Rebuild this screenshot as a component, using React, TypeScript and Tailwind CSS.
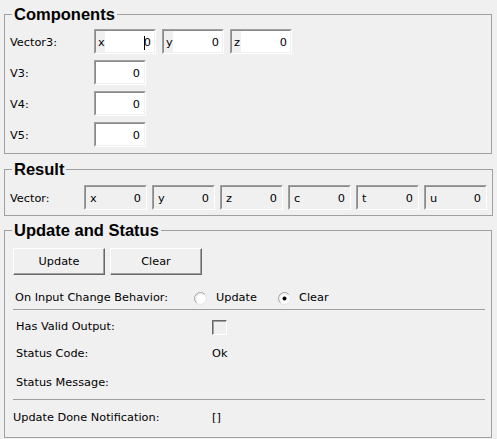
import React from "react";

const body = "font-['DejaVu_Sans',Tahoma,sans-serif] text-[11.3px] text-black";
const titleCls =
  "ml-[2px] px-[2px] font-['Liberation_Sans',Arial,sans-serif] font-bold text-[16.5px] leading-[20px] text-black";

function Sunken({
  w,
  children,
}: {
  w: string;
  children: React.ReactNode;
}) {
  return (
    <div
      className={`flex h-[25px] ${w} border border-t-[#a0a0a0] border-l-[#a0a0a0] border-b-white border-r-white`}
    >
      <div className="flex flex-1 border border-t-[#8a8a8a] border-l-[#8a8a8a] border-b-[#f0f0f0] border-r-[#f0f0f0]">
        {children}
      </div>
    </div>
  );
}

function EditField({
  label,
  cursor,
}: {
  label: string;
  cursor?: boolean;
}) {
  return (
    <Sunken w="w-[62px]">
      <div className="flex w-[9px] items-center bg-[#f0f0f0] pl-[2px] pt-[3px]">{label}</div>
      <div className="flex flex-1 items-center justify-end bg-white pr-[3px] pt-[3px]">
        {cursor && <span className="mr-[-1px] inline-block h-[14px] w-px bg-black" />}
        <span>0</span>
      </div>
    </Sunken>
  );
}

function NumField() {
  return (
    <Sunken w="w-[52px]">
      <div className="flex flex-1 items-center justify-end bg-white pr-[4px] pt-[3px]">0</div>
    </Sunken>
  );
}

function ReadField({ label }: { label: string }) {
  return (
    <Sunken w="w-[63px]">
      <div className="flex flex-1 items-center justify-between bg-[#f0f0f0] pl-[4px] pr-[4px] pt-[3px]">
        <span>{label}</span>
        <span>0</span>
      </div>
    </Sunken>
  );
}

function Button({ children }: { children: React.ReactNode }) {
  return (
    <div className="flex h-[27px] w-[92px] items-center justify-center border border-t-white border-l-white border-b-[#696969] border-r-[#696969] bg-[#f0f0f0] pt-[1px] shadow-[inset_-1px_-1px_0_#a0a0a0]">
      {children}
    </div>
  );
}

function Radio({ checked }: { checked?: boolean }) {
  return (
    <svg width="13" height="13" viewBox="0 0 13 13" className="shrink-0">
      <circle cx="6.5" cy="6.5" r="5.9" fill="white" stroke="#e3e3e3" strokeWidth="1" />
      <path d="M2.3 10.7 A5.9 5.9 0 0 1 10.7 2.3" fill="none" stroke="#a0a0a0" strokeWidth="1" />
      <path d="M3.1 9.9 A4.8 4.8 0 0 1 9.9 3.1" fill="none" stroke="#e8e8e8" strokeWidth="1" />
      {checked && <circle cx="6.5" cy="6.5" r="2" fill="black" />}
    </svg>
  );
}

function Row({
  label,
  children,
  className,
  labelCls,
}: {
  label: string;
  children?: React.ReactNode;
  className: string;
  labelCls?: string;
}) {
  return (
    <div className={`flex h-[20px] items-center ${className}`}>
      <div className={labelCls ?? "w-[199px] pl-[3px]"}>{label}</div>
      {children}
    </div>
  );
}

export default function App() {
  return (
    <div className={`h-[439px] w-[497px] bg-[#f0f0f0] pl-[4px] pr-[5px] pt-[4px] ${body}`}>
      <fieldset className="border border-[#a0a0a0] px-[5px] pb-[6px] pt-[5px]">
        <legend className={titleCls}>Components</legend>
        <div className="flex flex-col gap-[6px]">
          <div className="flex h-[25px] items-center">
            <div className="w-[84px] pt-[3px]">Vector3:</div>
            <div className="flex gap-[6px]">
              <EditField label="x" cursor />
              <EditField label="y" />
              <EditField label="z" />
            </div>
          </div>
          {["V3:", "V4:", "V5:"].map((l) => (
            <div key={l} className="flex h-[25px] items-center">
              <div className="w-[84px] pt-[3px]">{l}</div>
              <NumField />
            </div>
          ))}
        </div>
      </fieldset>

      <fieldset className="mt-[5px] border border-[#a0a0a0] px-[5px] pb-[5px] pt-[6px]">
        <legend className={titleCls}>Result</legend>
        <div className="flex h-[25px] items-center">
          <div className="w-[74px] pt-[3px]">Vector:</div>
          <div className="flex gap-[5px]">
            {["x", "y", "z", "c", "t", "u"].map((l) => (
              <ReadField key={l} label={l} />
            ))}
          </div>
        </div>
      </fieldset>

      <fieldset className="mt-[4px] border border-[#a0a0a0] px-[5px] pb-[9px] pt-[8px]">
        <legend className={titleCls}>Update and Status</legend>
        <div className="pl-[3px] pr-[1px]">
          <div className="flex gap-[5px]">
            <Button>Update</Button>
            <Button>Clear</Button>
          </div>
          <Row label="On Input Change Behavior:" className="mt-[13px]" labelCls="w-[181px] pl-[2px]">
            <div className="flex w-[84px] items-center gap-[9px]">
              <Radio />
              <span>Update</span>
            </div>
            <div className="flex items-center gap-[8px]">
              <Radio checked />
              <span>Clear</span>
            </div>
          </Row>
          <div className="mt-[1px] h-px bg-[#a0a0a0]" />
          <Row label="Has Valid Output:" className="mt-[7px]">
            <div className="h-[15px] w-[15px] border border-t-[#696969] border-l-[#696969] border-b-white border-r-white bg-[#f0f0f0] shadow-[inset_1px_1px_0_#a0a0a0]" />
          </Row>
          <Row label="Status Code:" className="mt-[7px]">
            <span>Ok</span>
          </Row>
          <Row label="Status Message:" className="mt-[9px]" />
          <div className="mt-[6px] h-px bg-[#a0a0a0]" />
          <Row label="Update Done Notification:" className="mt-[8px]" labelCls="w-[199px]">
            <span>[]</span>
          </Row>
        </div>
      </fieldset>
    </div>
  );
}
